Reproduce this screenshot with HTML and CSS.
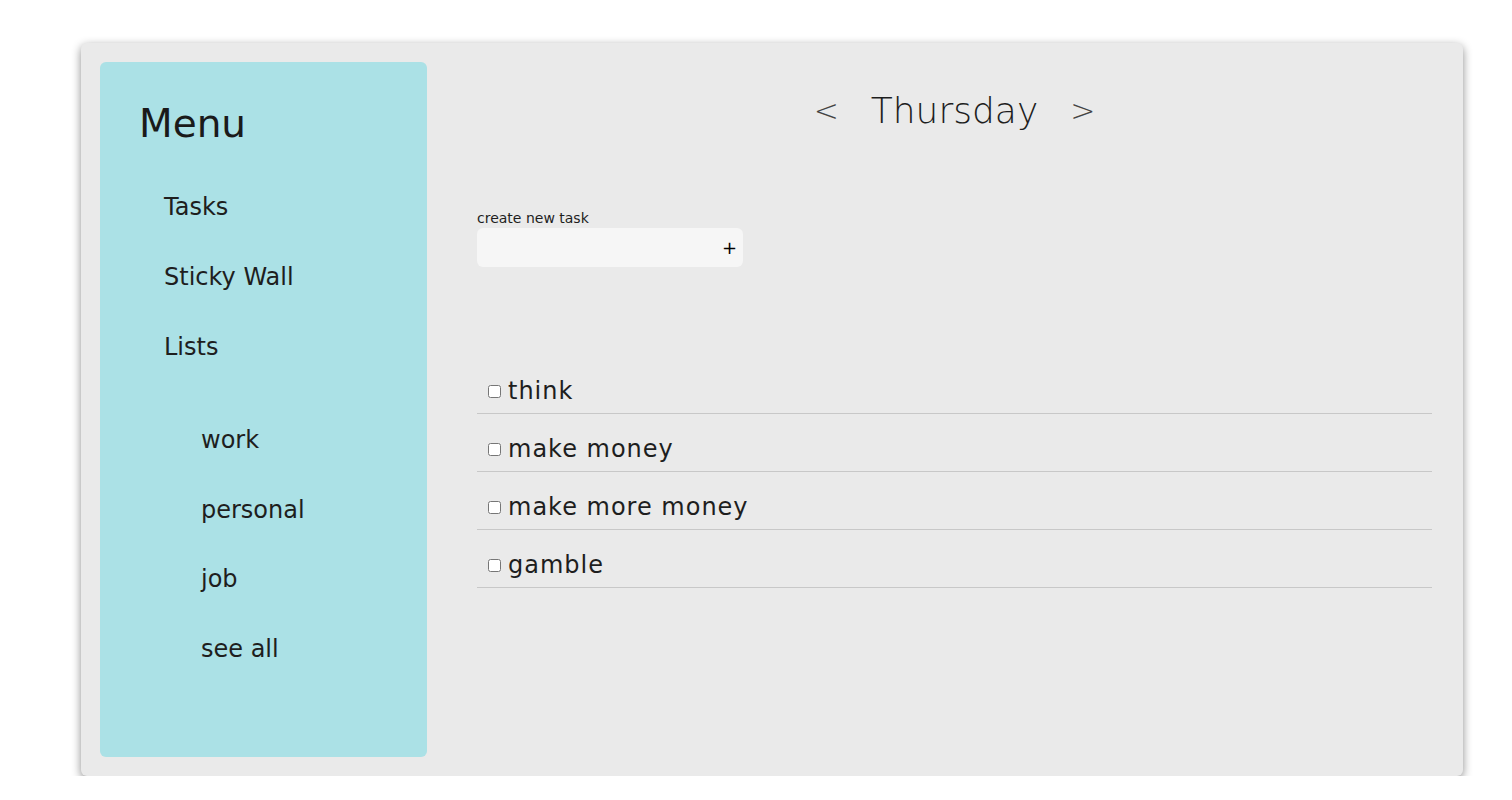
FILE: index.html
```html
<!DOCTYPE html>
<html lang="en">
<head>
<meta charset="utf-8">
<title>Tasks</title>
<link rel="stylesheet" href="styles.css">
</head>
<body>
<div class="app">
  <aside class="sidebar">
    <h1 class="menu-title">Menu</h1>
    <ul class="menu">
      <li class="menu-item">Tasks</li>
      <li class="menu-item">Sticky Wall</li>
      <li class="menu-item">Lists</li>
    </ul>
    <ul class="sublist">
      <li class="menu-item">work</li>
      <li class="menu-item">personal</li>
      <li class="menu-item">job</li>
      <li class="menu-item">see all</li>
    </ul>
  </aside>
  <main class="main">
    <div class="day-nav">
      <span class="arrow">&lt;</span>
      <span class="day">Thursday</span>
      <span class="arrow">&gt;</span>
    </div>
    <div class="new-task">
      <label class="new-label">create new task</label>
      <div class="new-input">
        <span class="plus">+</span>
      </div>
    </div>
    <ul class="tasks">
      <li class="task"><input type="checkbox" class="check">think</li>
      <li class="task"><input type="checkbox" class="check">make money</li>
      <li class="task"><input type="checkbox" class="check">make more money</li>
      <li class="task"><input type="checkbox" class="check">gamble</li>
    </ul>
  </main>
</div>
</body>
</html>
```
FILE: styles.css
```css
* { box-sizing: border-box; }
html, body { margin: 0; padding: 0; background: #ffffff; }
body {
  font-family: "DejaVu Sans", "Liberation Sans", sans-serif;
  color: #1e1e1e;
}
.app {
  margin: 43px 0 0 81px;
  width: 1382px;
  height: 733px;
  background: #eaeaea;
  border-radius: 6px;
  box-shadow: 0 3px 10px rgba(0,0,0,0.45);
  padding: 19px;
  display: flex;
}
.sidebar {
  width: 327px;
  flex: none;
  background: #abe1e6;
  border-radius: 6px;
  padding: 38px 0 0 39px;
}
.menu-title {
  margin: 0;
  font-size: 39px;
  line-height: 48px;
  font-weight: normal;
  color: #1a1a1a;
}
.menu, .sublist {
  list-style: none;
  margin: 0;
  padding: 0;
}
.menu { margin-top: 24px; padding-left: 25px; }
.sublist { margin-top: 24px; padding-left: 62px; }
.menu-item {
  height: 70px;
  line-height: 70px;
  font-size: 24px;
  color: #1e1e1e;
}
.sublist .menu-item { height: 69.5px; line-height: 69.5px; }
.main {
  flex: 1;
  padding: 25px 12px 0 50px;
}
.day-nav {
  display: flex;
  justify-content: center;
  align-items: center;
  gap: 32px;
  height: 48px;
  font-weight: 300;
}
.arrow { color: #444444; font-size: 30px; line-height: 48px; }
.day { color: #1e1e1e; font-size: 36px; line-height: 48px; }
.new-task { margin-top: 75px; }
.new-label {
  display: block;
  font-size: 14px;
  line-height: 17px;
  color: #1e1e1e;
}
.new-input {
  margin-top: 1px;
  width: 266px;
  height: 39px;
  background: #f6f6f6;
  border-radius: 6px;
  display: flex;
  justify-content: flex-end;
  align-items: center;
  padding-right: 6px;
}
.plus { font-size: 18px; color: #000000; line-height: 1; }
.tasks {
  list-style: none;
  margin: 89px 0 0 0;
  padding: 0;
}
.task {
  display: flex;
  align-items: center;
  height: 58px;
  padding: 20px 0 7px 7px;
  border-bottom: 1px solid #c8c8c8;
  font-size: 24px;
  line-height: 30px;
  letter-spacing: 1px;
  color: #1e1e1e;
  white-space: pre;
}
.check {
  width: 13px;
  height: 13px;
  margin: 0 7px 0 4px;
}
```
